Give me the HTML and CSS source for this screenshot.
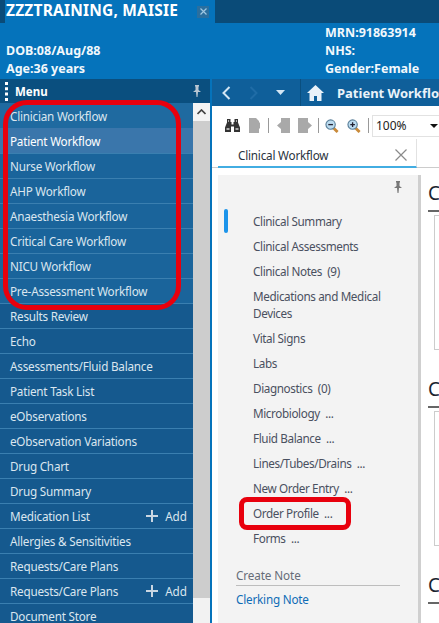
FILE: index.html
```html
<!DOCTYPE html>
<html lang="en">
<head>
<meta charset="utf-8">
<title>Patient Workflow</title>
<link rel="stylesheet" href="styles.css">
</head>
<body>
<div class="app">
  <header class="banner">
    <div class="banner-top">
      <div class="name-tab">
        <span class="name">ZZZTRAINING, MAISIE</span>
        <span class="close-box"><svg width="7" height="7" viewBox="0 0 7 7"><path d="M0.5 0.5L6.5 6.5M6.5 0.5L0.5 6.5" stroke="#9fc7e2" stroke-width="1.2"/></svg></span>
      </div>
      <div class="dark-band"></div>
    </div>
    <div class="demographics">
      <div class="demo-left"><div>DOB:08/Aug/88</div><div>Age:36 years</div></div>
      <div class="demo-right"><div>MRN:91863914</div><div>NHS:</div><div>Gender:Female</div></div>
    </div>
  </header>
  <div class="workspace">
    <aside class="sidebar">
      <div class="menu-bar">
        <svg class="grip" width="3" height="19" viewBox="0 0 3 19"><path d="M0 0h3v3H0zM0 5.3h3v3H0zM0 10.6h3v3H0zM0 16h3v3H0z" fill="#fff"/></svg>
        <span class="menu-title">Menu</span>
        <svg class="pin" width="8" height="12" viewBox="0 0 8 12"><path d="M2 0h4v1L5.500 2v3L8 7H5L4.500 12h-1L3 7H0l2.500-2V2L2 1z" fill="#b9c6d2"/></svg>
      </div>
      <div class="menu-body">
        <ul class="menu-list">
          <li class="menu-item first">Clinician Workflow</li>
          <li class="menu-item active">Patient Workflow</li>
          <li class="menu-item">Nurse Workflow</li>
          <li class="menu-item">AHP Workflow</li>
          <li class="menu-item">Anaesthesia Workflow</li>
          <li class="menu-item">Critical Care Workflow</li>
          <li class="menu-item">NICU Workflow</li>
          <li class="menu-item">Pre-Assessment Workflow</li>
          <li class="menu-item">Results Review</li>
          <li class="menu-item">Echo</li>
          <li class="menu-item">Assessments/Fluid Balance</li>
          <li class="menu-item">Patient Task List</li>
          <li class="menu-item">eObservations</li>
          <li class="menu-item">eObservation Variations</li>
          <li class="menu-item">Drug Chart</li>
          <li class="menu-item">Drug Summary</li>
          <li class="menu-item">Medication List<span class="add"><svg width="12" height="12" viewBox="0 0 12 12"><path d="M5 0h2v5h5v2H7v5H5V7H0V5h5z" fill="#c9d6e2"/></svg>Add</span></li>
          <li class="menu-item">Allergies &amp; Sensitivities</li>
          <li class="menu-item">Requests/Care Plans</li>
          <li class="menu-item">Requests/Care Plans<span class="add"><svg width="12" height="12" viewBox="0 0 12 12"><path d="M5 0h2v5h5v2H7v5H5V7H0V5h5z" fill="#c9d6e2"/></svg>Add</span></li>
          <li class="menu-item">Document Store</li>
        </ul>
        <div class="scrollbar">
          <div class="scroll-up"><svg width="9" height="6" viewBox="0 0 9 6"><path d="M0.500 5L4.500 1L8.500 5" fill="none" stroke="#444" stroke-width="1.700"/></svg></div>
          <div class="scroll-thumb"></div>
        </div>
      </div>
    </aside>
    <main class="content">
      <div class="nav-bar">
        <div class="nav-buttons">
          <svg width="9" height="14" viewBox="0 0 9 14"><path d="M7.500 1L1.500 7L7.500 13" fill="none" stroke="#d3e6f4" stroke-width="2"/></svg>
          <svg width="9" height="14" viewBox="0 0 9 14"><path d="M1.500 1L7.500 7L1.500 13" fill="none" stroke="#1f6ca6" stroke-width="2"/></svg>
          <svg width="9" height="5" viewBox="0 0 9 5"><path d="M0 0h9L4.500 5z" fill="#d3e6f4"/></svg>
        </div>
        <div class="nav-title">
          <svg width="17" height="16" viewBox="0 0 17 16"><path d="M8.500 0L17 8h-2.500v8H10v-5H7v5H2.500V8H0z" fill="#e9f2f9"/></svg>
          <span class="nav-text">Patient Workflow</span>
        </div>
      </div>
      <div class="toolbar">
        <svg class="tool-binoc" width="15" height="13" viewBox="0 0 15 13"><path d="M2 0h3.500v3H6.500v2.500h2V3h1V0H13v3.500l2 5V13H9V7.500H6V13H0V8.500l2-5z" fill="#333"/><path d="M1.500 9h3v2h-3zM10.500 9h3v2h-3zM3 1h1v2H3zM11 1h1v2h-1z" fill="#aaa"/></svg>
        <svg class="tool-page" width="11" height="15" viewBox="0 0 11 15"><path d="M0 0h7l3 3v1l1 1v5l-1 1v4H0z" fill="#a9a9a9"/></svg>
        <span class="tool-sep sep-first"></span>
        <svg class="tool-prev" width="13" height="15" viewBox="0 0 13 15"><path d="M4 0h9v15H4v-4L0 7.500 4 4z" fill="#a9a9a9"/></svg>
        <svg class="tool-next" width="14" height="15" viewBox="0 0 14 15"><path d="M0 0h10v4l4 3.500-4 3.500v4H0z" fill="#a9a9a9"/></svg>
        <span class="tool-sep sep-second"></span>
        <svg class="tool-zoom-out" width="14" height="14" viewBox="0 0 15 15"><path d="M8.500 9l5 5" stroke="#c98a3a" stroke-width="3"/><circle cx="6" cy="6" r="5" fill="#bcdcf0" stroke="#5a7f99" stroke-width="1.200"/><path d="M3.500 6h5" stroke="#223" stroke-width="1.400"/></svg>
        <svg class="tool-zoom-in" width="14" height="14" viewBox="0 0 15 15"><path d="M8.500 9l5 5" stroke="#c98a3a" stroke-width="3"/><circle cx="6" cy="6" r="5" fill="#bcdcf0" stroke="#5a7f99" stroke-width="1.200"/><path d="M3.500 6h5M6 3.500v5" stroke="#223" stroke-width="1.400"/></svg>
        <span class="tool-sep sep-third"></span>
        <div class="zoom-select"><span>100%</span><svg width="8" height="4" viewBox="0 0 8 4"><path d="M0 0h8L4 4z" fill="#111"/></svg></div>
      </div>
      <div class="tab-row">
        <div class="tab">
          <span>Clinical Workflow</span>
          <svg width="12" height="12" viewBox="0 0 12 12"><path d="M0.500 0.500L11.500 11.500M11.500 0.500L0.500 11.500" stroke="#8a8a8a" stroke-width="1.200"/></svg>
        </div>
      </div>
      <div class="columns">
        <nav class="side-panel">
          <div class="panel-pin"><svg width="8" height="12" viewBox="0 0 8 12"><path d="M2 0h4v1L5.500 2v3L8 7H5L4.500 12h-1L3 7H0l2.500-2V2L2 1z" fill="#777"/></svg></div>
          <div class="panel-marker"></div>
          <ul class="panel-list">
            <li>Clinical Summary</li>
            <li>Clinical Assessments</li>
            <li>Clinical Notes&nbsp; (9)</li>
            <li>Medications and Medical Devices</li>
            <li>Vital Signs</li>
            <li>Labs</li>
            <li>Diagnostics&nbsp; (0)</li>
            <li>Microbiology&nbsp; ...</li>
            <li>Fluid Balance&nbsp; ...</li>
            <li>Lines/Tubes/Drains&nbsp; ...</li>
            <li>New Order Entry&nbsp; ...</li>
            <li>Order Profile&nbsp; ...</li>
            <li>Forms&nbsp; ...</li>
          </ul>
          <div class="create-note">Create Note</div>
          <a class="note-link">Clerking Note</a>
        </nav>
        <section class="summary">
          <div class="card"><h2>C</h2><div class="card-box"></div></div>
          <div class="card"><h2>C</h2><div class="card-box"></div></div>
          <div class="card"><h2>C</h2></div>
        </section>
      </div>
    </main>
  </div>
</div>
<div class="callout callout-menu"></div>
<div class="callout callout-order"></div>
</body>
</html>
```
FILE: styles.css
```css
* { box-sizing: border-box; }
html, body { margin: 0; padding: 0; }
body {
  width: 439px;
  height: 623px;
  overflow: hidden;
  position: relative;
  font-family: "Noto Sans", "Open Sans", sans-serif;
  background: #fff;
}
ul { list-style: none; margin: 0; padding: 0; }
svg { display: block; flex: none; }
.app { display: flex; flex-direction: column; height: 623px; }

.banner { height: 79px; background: #0573bb; color: #f2f8fc; flex: none; }
.banner-top { display: flex; height: 23px; background: #0a4b78; }
.name-tab {
  width: 210px;
  margin-left: 5px;
  background: #0573bb;
  display: flex;
  align-items: center;
  justify-content: space-between;
  padding: 0 6px 3px 1px;
}
.name { font: bold 15.5px "Noto Sans", sans-serif; letter-spacing: 0.2px; color: #fff; white-space: nowrap; }
.close-box { width: 12px; height: 12px; background: #2a6f9f; display: flex; align-items: center; justify-content: center; margin-top: 3px; }
.dark-band { flex: 1; }
.demographics { display: flex; font-weight: bold; font-size: 12.5px; line-height: 18px; }
.demo-left { width: 325px; padding: 19px 0 0 6px; }
.demo-right { flex: 1; white-space: nowrap; padding-top: 1px; }

.workspace { flex: 1; display: flex; min-height: 0; }
.sidebar { width: 210px; display: flex; flex-direction: column; flex: none; }
.menu-bar {
  height: 24px;
  background: #0a4f7f;
  display: flex;
  align-items: center;
  padding: 0 9px 0 5px;
  color: #fff;
}
.menu-title { font-weight: bold; font-size: 11.5px; margin-left: 7px; flex: 1; }
.menu-body { flex: 1; display: flex; min-height: 0; background: #155a8e; overflow: hidden; }
.menu-list { flex: 1; }
.menu-item {
  height: 25px;
  border-top: 1px solid #3a7fb0;
  background: #15598e;
  color: #dbe6ef;
  font-size: 11.7px;
  letter-spacing: -0.22px;
  padding: 0 6px 0 10px;
  display: flex;
  align-items: center;
  justify-content: space-between;
  white-space: nowrap;
}
.menu-item:nth-child(-n+8) { background: #1a649b; }
.menu-item.first { background: #1f6aa0; border-top-color: #1f6aa0; }
.menu-item.active { background: #3a76ab; border-top-color: #3a76ab; color: #fff; }
.add { display: flex; align-items: center; gap: 7px; letter-spacing: 0; }
.scrollbar { width: 17px; background: #f2f2f2; display: flex; flex-direction: column; flex: none; }
.scroll-up { height: 18px; display: flex; align-items: center; justify-content: center; background: #f4f4f4; }
.scroll-thumb { height: 477px; background: #cdcdcd; }

.content { flex: 1; min-width: 0; display: flex; flex-direction: column; border-left: 2px solid #0573bb; }
.nav-bar { height: 27px; background: #0f5f9a; display: flex; flex: none; align-items: center; color: #e9f2f9; }
.nav-buttons { width: 89px; display: flex; align-items: center; padding-left: 10px; gap: 18px; height: 100%; border-right: 1px solid #0a4f7f; flex: none; }
.nav-title { display: flex; align-items: center; gap: 13px; padding-left: 6px; white-space: nowrap; overflow: hidden; }
.nav-text { font-weight: bold; font-size: 13px; }

.toolbar { height: 33px; display: flex; align-items: center; padding: 6px 0 0 13px; flex: none; background: #fff; }
.tool-sep { width: 1px; height: 15px; background: #999; }
.tool-page { margin-left: 9px; }
.sep-first { margin-left: 8px; }
.tool-prev { margin-left: 8px; }
.tool-next { margin-left: 8px; }
.sep-second { margin-left: 6px; }
.tool-zoom-out { margin-left: 6px; }
.tool-zoom-in { margin-left: 8px; }
.sep-third { margin-left: 7px; }
.zoom-select {
  flex: 1;
  height: 22px;
  margin-left: 3px;
  border: 1px solid #e2e2e2;
  border-right: 0;
  display: flex;
  align-items: center;
  justify-content: space-between;
  padding: 0 1px 0 3px;
  font-size: 12px;
  color: #222;
}
.tab-row { height: 29px; flex: none; border-bottom: 1px solid #ccc; padding-left: 6px; }
.tab {
  width: 199px;
  height: 29px;
  border-bottom: 2px solid #42ade2;
  border-right: 1px solid #e2e2e2;
  display: flex;
  align-items: center;
  justify-content: space-between;
  padding: 4px 9px 0 20px;
  font-size: 11.7px;
  letter-spacing: -0.2px;
  color: #2a3340;
}

.columns { flex: 1; min-height: 0; display: flex; gap: 7px; padding: 7px 0 0 6px; overflow: hidden; }
.side-panel {
  width: 203px;
  flex: none;
  background: #f3f3f3;
  border-right: 3px solid #cfcfcf;
  position: relative;
  padding-top: 34px;
  font-size: 11.7px;
  letter-spacing: -0.38px;
  color: #4a5060;
}
.panel-pin { position: absolute; top: 6px; right: 16px; }
.panel-marker { position: absolute; left: 6px; top: 34px; width: 4px; height: 24px; background: #1c94ea; border-radius: 2px; }
.panel-list { padding-left: 35px; width: 190px; }
.panel-list li { padding: 4px 0; line-height: 17px; }
.create-note { margin: 16px 0 0 18px; width: 164px; padding-bottom: 1px; border-bottom: 1px solid #bdbdbd; line-height: 17px; color: #666c78; letter-spacing: -0.1px; }
.note-link { display: block; margin: 5px 0 0 18px; line-height: 17px; color: #0f6cb6; letter-spacing: -0.2px; }

.summary { flex: 1; min-width: 0; }
.card { height: 196px; }
h2 { margin: 0; font-size: 19px; font-weight: normal; color: #1a2430; line-height: 26px; height: 37px; padding-top: 5px; border-bottom: 2px solid #666; }
.card-box { margin: 3px 0 0 6px; height: 135px; border: 1px solid #ccc; border-right: 0; }

.callout { position: absolute; border-style: solid; border-color: #e8000d; }
.callout-menu { left: 3px; top: 100px; width: 178px; height: 210px; border-width: 5px; border-radius: 24px; }
.callout-order { left: 239px; top: 497px; width: 112px; height: 33px; border-width: 5px; border-radius: 8px; }
```
